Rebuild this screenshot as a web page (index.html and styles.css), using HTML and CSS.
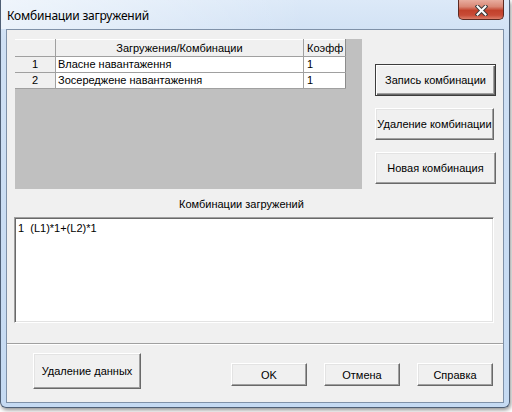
FILE: index.html
```html
<!doctype html>
<html>
<head>
<meta charset="utf-8">
<link rel="stylesheet" href="styles.css">
<title>Комбинации загружений</title>
</head>
<body>
<div class="window">
  <div class="titlebar">
    <span class="title">Комбинации загружений</span>
    <div class="close">
      <svg width="13" height="11" viewBox="0 0 13 11">
        <path d="M2.5 1.5 L10.5 9.5 M10.5 1.5 L2.5 9.5" stroke="#3b3b3b" stroke-width="4" stroke-linecap="square"/>
        <path d="M2.5 1.5 L10.5 9.5 M10.5 1.5 L2.5 9.5" stroke="#fff" stroke-width="2" stroke-linecap="square"/>
      </svg>
    </div>
  </div>

  <div class="client">
    <div class="top">
      <div class="grid">
        <table class="cells">
          <tr class="head">
            <th class="num"></th>
            <th class="name">Загружения/Комбинации</th>
            <th class="coef">Коэфф</th>
          </tr>
          <tr>
            <td class="num">1</td>
            <td class="name">Власне навантаження</td>
            <td class="coef">1</td>
          </tr>
          <tr>
            <td class="num">2</td>
            <td class="name">Зосереджене навантаження</td>
            <td class="coef">1</td>
          </tr>
        </table>
      </div>
      <div class="side">
        <div class="btn btn-default side-btn">Запись комбинации</div>
        <div class="btn side-btn narrow">Удаление комбинации</div>
        <div class="btn side-btn">Новая комбинация</div>
      </div>
    </div>

    <div class="memo-label">Комбинации загружений</div>
    <div class="memo">1&nbsp;&nbsp;(L1)*1+(L2)*1</div>

    <div class="separator"></div>

    <div class="bottom">
      <div class="btn del-data">Удаление данных</div>
      <div class="btn cmd ok">OK</div>
      <div class="btn cmd">Отмена</div>
      <div class="btn cmd">Справка</div>
    </div>
  </div>
</div>
</body>
</html>
```

FILE: styles.css
```css
html,
body {
    margin: 0;
    padding: 0;
}
body {
    width: 512px;
    height: 412px;
    background: #ffffff;
    font-family: "Liberation Sans", Arial, sans-serif;
    font-size: 11px;
    color: #000;
    overflow: hidden;
}

/* window frame */
.window {
    box-sizing: border-box;
    width: 510px;
    height: 408px;
    padding: 0 5px 4px 5px;
    border: 1px solid #4f5f75;
    border-top: none;
    border-radius: 0 0 6px 6px;
    background: linear-gradient(to bottom, #dce9f8 0, #cfe0f4 40px, #c5daf2 100%);
    box-shadow: 1px 2px 4px rgba(0, 0, 0, 0.45);
}
.titlebar {
    height: 29px;
    display: flex;
    justify-content: space-between;
    align-items: flex-start;
    background: linear-gradient(to right, rgba(255,255,255,0.55), rgba(255,255,255,0) 60%);
    margin: 0 -5px;
    padding: 0 5px;
}
.title {
    font-family: "Noto Sans", "Open Sans", sans-serif;
    font-size: 12px;
    line-height: 16px;
    padding: 8px 0 0 1px;
    color: #000;
    letter-spacing: -0.2px;
}
.close {
    box-sizing: border-box;
    width: 46px;
    height: 20px;
    border: 1px solid #5c2a22;
    border-top: none;
    border-radius: 0 0 5px 5px;
    background: linear-gradient(to bottom, #e8ad9f 0, #d98775 35%, #c2412b 55%, #c84b36 80%, #dc7d68 100%);
    display: flex;
    align-items: center;
    justify-content: center;
    padding-top: 1px;
}

/* client area */
.client {
    box-sizing: border-box;
    height: 374px;
    border: 1px solid #7f91a8;
    background: #f0f0f0;
}
.top {
    display: flex;
    padding: 9px 0 0 8px;
}
.grid {
    width: 347px;
    height: 150px;
    background: #c0c0c0;
}
.cells {
    border-collapse: collapse;
    font-size: 11px;
}
.cells th,
.cells td {
    padding: 0 2px;
    height: 15px;
    line-height: 15px;
    border-right: 1px solid #a0a0a0;
    border-bottom: 1px solid #a0a0a0;
    background: #fff;
    font-weight: normal;
    text-align: left;
    white-space: nowrap;
}
.cells .head th {
    height: 16px;
    background: #f0f0f0;
    border-top: 1px solid #ffffff;
}
.cells .num {
    width: 36px;
    text-align: center;
    background: #f0f0f0;
}
.cells .name {
    width: 243px;
}
.cells .head .name {
    text-align: center;
}
.cells .coef {
    width: 36px;
    padding-left: 3px;
    border-right-color: #8c8c8c;
}

.side {
    display: flex;
    flex-direction: column;
    gap: 12px;
    margin-left: 13px;
    padding-top: 25px;
}

/* classic 3d buttons */
.btn {
    box-sizing: border-box;
    display: flex;
    align-items: center;
    justify-content: center;
    background: #f0f0f0;
    border: 1px solid;
    border-color: #ffffff #696969 #696969 #ffffff;
    box-shadow: inset -1px -1px 0 #a0a0a0, inset 1px 1px 0 #e3e3e3;
    white-space: nowrap;
    overflow: hidden;
}
.btn-default {
    outline: 1px solid #3c3c3c;
    outline-offset: -1px;
    border-color: #3c3c3c;
    box-shadow: inset 1px 1px 0 #ffffff, inset -1px -1px 0 #696969, inset -2px -2px 0 #a0a0a0;
}
.side-btn {
    width: 121px;
    height: 32px;
}
.side-btn.narrow {
    width: 119px;
}

.memo-label {
    padding: 8px 0 0 172px;
    height: 14px;
    line-height: 14px;
}
.memo {
    box-sizing: border-box;
    margin: 6px 0 0 7px;
    width: 480px;
    height: 106px;
    background: #fff;
    border: 1px solid;
    border-color: #a0a0a0 #ffffff #ffffff #a0a0a0;
    box-shadow: inset 1px 1px 0 #696969, inset -1px -1px 0 #e3e3e3;
    padding: 3px 3px;
    line-height: 14px;
}

.separator {
    margin-top: 20px;
    border-top: 1px solid #a0a0a0;
    border-bottom: 1px solid #ffffff;
}

.bottom {
    display: flex;
    align-items: flex-start;
    padding: 8px 10px 0 26px;
}
.del-data {
    width: 108px;
    height: 36px;
}
.cmd {
    width: 76px;
    height: 23px;
    margin-top: 10px;
    margin-left: 17px;
}
.cmd.ok {
    margin-left: auto;
}
```
